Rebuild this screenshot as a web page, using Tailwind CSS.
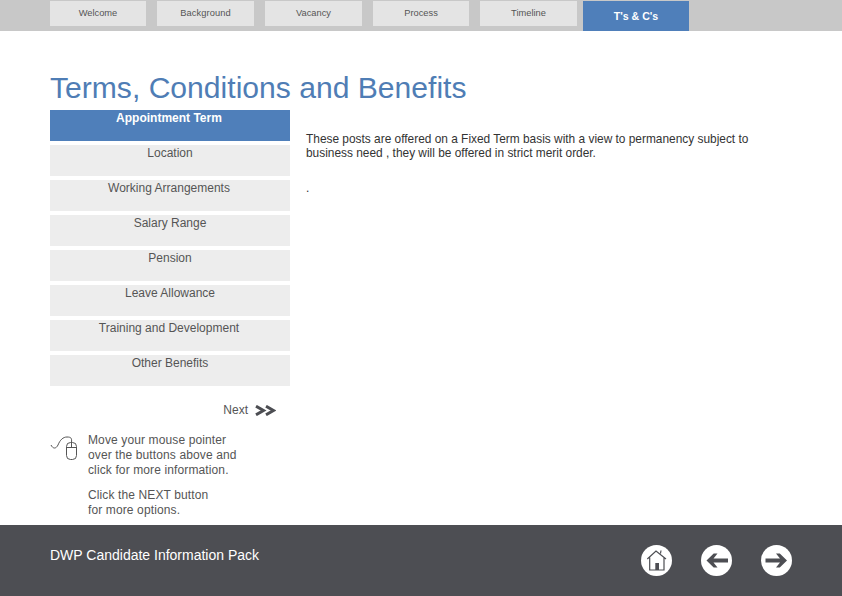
<!DOCTYPE html>
<html lang="en">
  <head>
    <meta charset="UTF-8" />
    <title>DWP Candidate Information Pack</title>
    <script src="https://cdn.jsdelivr.net/npm/@tailwindcss/browser@4"></script>
  </head>
  <body class="w-[842px] h-[596px] overflow-hidden bg-white flex flex-col font-['Liberation_Sans',Arial,sans-serif]">
    <!-- top tabs -->
    <nav class="h-[31px] shrink-0 bg-[#c8c8c8] pl-[50px] pt-px flex items-start text-[9.3px] text-[#555]">
      <a class="w-[96px] h-[25px] mr-[11px] pt-[7px] bg-[#e4e4e4] text-center leading-[11px]">Welcome</a>
      <a class="w-[97px] h-[25px] mr-[11px] pt-[7px] bg-[#e4e4e4] text-center leading-[11px] tracking-[0.1px]">Background</a>
      <a class="w-[97px] h-[25px] mr-[11px] pt-[7px] bg-[#e4e4e4] text-center leading-[11px]">Vacancy</a>
      <a class="w-[96px] h-[25px] mr-[11px] pt-[7px] bg-[#e4e4e4] text-center leading-[11px]">Process</a>
      <a class="w-[97px] h-[25px] mr-[6px] pt-[7px] bg-[#e4e4e4] text-center leading-[11px]">Timeline</a>
      <a class="w-[106px] h-[30px] pt-[9px] bg-[#4f7fba] text-center leading-[12px] text-[10.6px] font-bold text-white">T's &amp; C's</a>
    </nav>

    <main class="flex-1 pl-[50px] pt-[39px]">
      <h1 class="text-[30.1px] leading-[36px] text-[#4f7db5] mb-[4px]">Terms, Conditions and Benefits</h1>
      <div class="flex">
        <div class="w-[240px] shrink-0">
          <ul class="flex flex-col gap-[4px] text-[12px] leading-[14px] text-center text-[#555]">
            <li class="h-[31px] pt-px pr-[2px] bg-[#4f7fba] text-white font-bold">Appointment Term</li>
            <li class="h-[31px] pt-[1px] bg-[#ededed]">Location</li>
            <li class="h-[31px] pt-[1px] bg-[#ededed] pr-[2px]">Working Arrangements</li>
            <li class="h-[31px] pt-[1px] bg-[#ededed]">Salary Range</li>
            <li class="h-[31px] pt-[1px] bg-[#ededed]">Pension</li>
            <li class="h-[31px] pt-[1px] bg-[#ededed]">Leave Allowance</li>
            <li class="h-[31px] pt-[1px] bg-[#ededed] pr-[2px]">Training and Development</li>
            <li class="h-[31px] pt-[1px] bg-[#ededed]">Other Benefits</li>
          </ul>
          <div class="mt-[16px] flex justify-end items-center pr-[14px] h-[16px] text-[12px] text-[#555]">
            <span class="mr-[7px]">Next</span>
            <svg class="w-[21px] h-[11px]" viewBox="0 0 21 11" fill="none" stroke="#4d4e53" stroke-width="3"><path d="M1 1.200 8.500 5.500 1 9.800M11 1.200l7.500 4.300L11 9.800"/></svg>
          </div>
          <div class="mt-[15px] flex">
            <svg class="w-[38px] h-[32px] mt-[-5px] shrink-0 text-[#555]" viewBox="0 0 38 32" fill="none" stroke="currentColor" stroke-width="1"><path d="M1 17c2 4 5 4 7 0 2-5 5-8 9-8 4 0 5 1 4.500 5.500"/><rect x="16.500" y="14.500" width="10" height="17" rx="4"/><path d="M16.500 19.500h10M21.500 14.500v5"/></svg>
            <div class="text-[12px] leading-[15px] tracking-[0.12px] text-[#555]">
              <p class="mb-[10px]">Move your mouse pointer<br />over the buttons above and<br />click for more information.</p>
              <p>Click the NEXT button<br />for more options.</p>
            </div>
          </div>
        </div>
        <div class="ml-[16px] pt-[22px] w-[470px] text-[11.9px] leading-[14px] text-[#333]">
          <p>These posts are offered on a Fixed Term basis with a view to permanency subject to business need , they will be offered in strict merit order.</p>
          <p class="mt-[21px]">.</p>
        </div>
      </div>
    </main>

    <footer class="h-[71px] shrink-0 bg-[#4d4e53] flex items-center pl-[50px] text-white">
      <span class="text-[14px] mb-[10px]">DWP Candidate Information Pack</span>
      <div class="ml-auto mr-[50px] flex gap-[29px]">
        <svg class="w-[31px] h-[31px]" viewBox="0 0 31 31"><circle cx="15.500" cy="15.500" r="15.500" fill="#fff"/><path d="M6.300 14 15 6l10 8M19.500 8.500 20 5.500M8.700 12.500V25H23V12.500" fill="none" stroke="#4d4e53" stroke-width="1.200"/><rect x="14.300" y="18" width="3.700" height="7" fill="#4d4e53"/></svg>
        <svg class="w-[31px] h-[31px]" viewBox="0 0 31 31"><circle cx="15.500" cy="15.500" r="15.500" fill="#fff"/><path d="M27 13.500H12.500l4-5h-3.800L5.500 15.500l7.200 7h3.800l-4-5H27z" fill="#4d4e53"/></svg>
        <svg class="w-[31px] h-[31px]" viewBox="0 0 31 31"><circle cx="15.500" cy="15.500" r="15.500" fill="#fff"/><path d="M4.500 13.500H19l-4-5h3.800l7.200 7-7.200 7H15l4-5H4.500z" fill="#4d4e53"/></svg>
      </div>
    </footer>
  </body>
</html>
